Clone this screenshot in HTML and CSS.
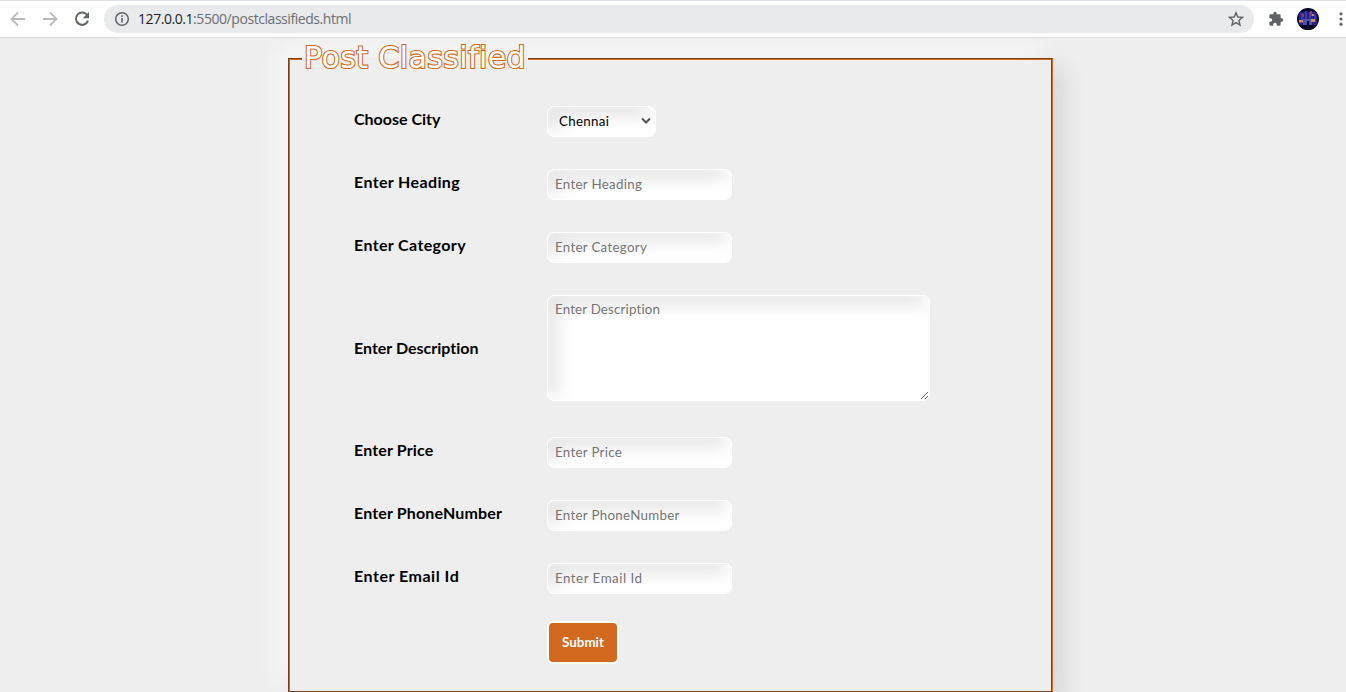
FILE: index.html
```html
<!DOCTYPE html>
<html lang="en">
<head>
<meta charset="utf-8">
<title>Post Classified</title>
<link rel="stylesheet" href="styles.css">
</head>
<body>
<header class="toolbar">
  <svg class="nav" viewBox="0 0 16 16"><path d="M15 8H2M8 1.5L1.5 8L8 14.5" fill="none" stroke="#bababc" stroke-width="1.8"/></svg>
  <svg class="nav" viewBox="0 0 16 16"><path d="M1 8H14M8 1.5L14.500 8L8 14.500" fill="none" stroke="#bababc" stroke-width="1.8"/></svg>
  <svg class="nav" viewBox="0 0 16 16"><path d="M13.300 4.200A6.200 6.200 0 1 0 14 9.700" fill="none" stroke="#5f6368" stroke-width="2"/><path d="M15 1V7.300H8.700Z" fill="#5f6368"/></svg>
  <div class="address">
    <svg class="info" viewBox="0 0 16 16"><circle cx="8" cy="8" r="6.300" fill="none" stroke="#5f6368" stroke-width="1.500"/><path d="M8 7v4.500M8 4.300v1.700" stroke="#5f6368" stroke-width="1.600"/></svg>
    <span class="url"><b class="host">127.0.0.1</b>:5500/postclassifieds.html</span>
    <svg class="star" viewBox="0 0 16 16"><path d="M8 1.700L9.800 6L14.500 6.400L10.900 9.500L12 14.100L8 11.600L4 14.100L5.100 9.500L1.500 6.400L6.200 6Z" fill="none" stroke="#5f6368" stroke-width="1.400"/></svg>
  </div>
  <svg class="puzzle" viewBox="0 0 24 24"><path fill="#5f6368" d="M20.500 11H19V7a2 2 0 0 0-2-2h-4V3.500a2.500 2.500 0 0 0-5 0V5H4a2 2 0 0 0-2 2v3.800h1.500a2.700 2.700 0 0 1 0 5.400H2V20a2 2 0 0 0 2 2h3.800v-1.500a2.700 2.700 0 0 1 5.400 0V22H17a2 2 0 0 0 2-2v-4h1.500a2.500 2.500 0 0 0 0-5z"/></svg>
  <svg class="avatar" viewBox="0 0 22 22">
    <defs><clipPath id="disc"><circle cx="11" cy="11" r="11"/></clipPath></defs>
    <g clip-path="url(#disc)">
      <path fill="#0b0730" d="M0 0h22v22H0z"/>
      <path fill="#272380" d="M2 4h18v13H2z"/>
      <path fill="#3b38a8" d="M4 5h2v7H4zM8 3h2v8H8zM12 4h2v7h-2zM17 7h2v7h-2z"/>
      <path fill="#4456b8" d="M6 11h9v6H6z"/>
      <path fill="#7a3d8e" d="M5 6h2v3H5zM13 3h2v5h-2z"/>
      <path fill="#d78866" d="M2 12h4v2.500H2zM14 11h4v3h-4zM15 6h2v2h-2z"/>
      <path fill="#090520" d="M0 17h22v5H0zM10 13h2v6h-2z"/>
    </g>
  </svg>
  <svg class="more" viewBox="0 0 4 16"><g fill="#5f6368"><circle cx="2" cy="2.800" r="1.600"/><circle cx="2" cy="8" r="1.600"/><circle cx="2" cy="13.200" r="1.600"/></g></svg>
</header>
<main class="page">
  <fieldset class="panel">
    <legend class="title">Post Classified</legend>
    <form class="form">
      <div class="row"><label class="label" for="city">Choose City</label>
        <div class="select-wrap"><select class="field select" id="city"><option>Chennai</option></select><svg class="chevron" viewBox="0 0 10 8"><path d="M1 1.500L5 5.500L9 1.500" fill="none" stroke="#555" stroke-width="2"/></svg></div></div>
      <div class="row"><label class="label label-wide" for="heading">Enter Heading</label><input class="field" id="heading" placeholder="Enter Heading"></div>
      <div class="row"><label class="label label-wide" for="category">Enter Category</label><input class="field" id="category" placeholder="Enter Category"></div>
      <div class="row row-area"><label class="label label-area" for="description">Enter Description</label><textarea class="field area" id="description" placeholder="Enter Description"></textarea></div>
      <div class="row"><label class="label label-mid" for="price">Enter Price</label><input class="field" id="price" placeholder="Enter Price"></div>
      <div class="row"><label class="label label-mid" for="phone">Enter PhoneNumber</label><input class="field" id="phone" placeholder="Enter PhoneNumber"></div>
      <div class="row row-last"><label class="label label-widest" for="email">Enter Email Id</label><input class="field field-wide" id="email" placeholder="Enter Email Id"></div>
      <div class="row"><span></span><button class="submit" type="button">Submit</button></div>
    </form>
  </fieldset>
</main>
</body>
</html>
```
FILE: styles.css
```css
* { box-sizing: border-box; }
html, body { height: 100%; }
body {
  margin: 0;
  overflow: hidden;
  background: #eee;
  font-family: Lato, "Open Sans", sans-serif;
}
.toolbar {
  display: flex;
  align-items: center;
  height: 38px;
  padding-left: 10px;
  background: #fff;
  border-top: 1px solid #dee1e6;
  border-bottom: 1px solid #d9dadb;
  overflow: hidden;
}
.nav { width: 16px; height: 16px; margin-right: 16px; flex: none; }
.address {
  display: flex;
  align-items: center;
  width: 1150px;
  height: 28px;
  margin-left: -2px;
  padding: 0 10px;
  border-radius: 14px;
  background: #e9eaec;
  flex: none;
}
.info { width: 16px; height: 16px; }
.url {
  flex: 1;
  margin-left: 8px;
  font: 14px/20px "Open Sans", sans-serif;
  letter-spacing: -0.44px;
  color: #6b6e72;
}
.host { font-weight: 400; color: #202124; }
.star { width: 16px; height: 16px; }
.puzzle { width: 16px; height: 16px; margin-left: 14px; flex: none; }
.avatar { width: 22px; height: 22px; margin-left: 13px; flex: none; }
.more { width: 4px; height: 16px; margin-left: 20px; flex: none; }
.page {
  height: 654px;
  padding-top: 3px;
  overflow: hidden;
}
.panel {
  width: 765px;
  height: 652px;
  margin: 0 0 0 288px;
  padding: 0 0 0 64px;
  border: 2px groove chocolate;
  box-shadow: 10px 10px 20px #d5d5d5, -10px -10px 20px #f9f9f9;
}
.title {
  width: 226px;
  height: 36px;
  margin-left: -52px;
  padding: 0 2px;
  font: 30px/34px "DejaVu Sans", sans-serif;
  letter-spacing: 0.4px;
  white-space: nowrap;
  color: #fff;
  -webkit-text-stroke: 2.2px chocolate;
  paint-order: stroke fill;
}
.form { padding-top: 29px; }
.row {
  display: grid;
  grid-template-columns: 193px auto;
  justify-items: start;
  align-items: center;
  margin-bottom: 32px;
}
.row-area { margin-bottom: 36px; }
.row-last { margin-bottom: 27px; }
.label {
  padding-bottom: 5px;
  font-size: 16px;
  line-height: 20px;
  font-weight: 700;
  font-variant-ligatures: none;
  color: #000;
}
.label-mid { letter-spacing: 0.15px; }
.label-wide { letter-spacing: 0.37px; }
.label-widest { letter-spacing: 0.52px; }
.label-area { padding-bottom: 0; }
.field {
  display: block;
  width: 185px;
  height: 31px;
  padding: 0 7px 1px;
  border: 1px solid #fff;
  border-radius: 7px;
  outline: none;
  background: #fff;
  box-shadow: inset -5px -5px 15px #fff, inset 8px 8px 18px #e2e2e2;
  font: 13.333px/18px Lato, "Open Sans", sans-serif;
  letter-spacing: 0.3px;
}
.field-wide { letter-spacing: 0.5px; }
.field::placeholder { color: #757575; opacity: 1; }
.select-wrap { position: relative; }
.select { width: 109px; padding-left: 11px; appearance: none; color: #000; }
.chevron { position: absolute; right: 5px; top: 11px; width: 10px; height: 8px; }
.area { width: 383px; height: 106px; padding-top: 4px; letter-spacing: 0.17px; }
.submit {
  width: 72px;
  height: 43px;
  padding: 0 0 2px;
  border: 2px solid #fff;
  border-radius: 6px;
  background: chocolate;
  color: #fff;
  font: 700 13.333px/18px Lato, "Open Sans", sans-serif;
}
```
